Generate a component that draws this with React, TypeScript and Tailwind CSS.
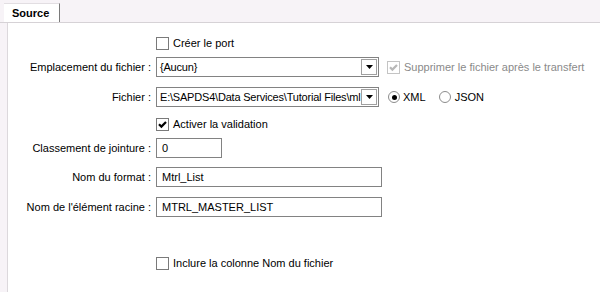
import React from 'react';

const font = { fontFamily: '"Liberation Sans", Arial, sans-serif' };

function Check({ checked = false, disabled = false }: { checked?: boolean; disabled?: boolean }) {
  return (
    <span
      className={
        'flex h-[13px] w-[13px] shrink-0 items-center justify-center border bg-white ' +
        (disabled ? 'border-[#c4c4c4]' : 'border-[#7a7a7a]')
      }
    >
      {checked && (
        <svg width="11" height="11" viewBox="0 0 11 11">
          <path
            d="M2 5.2 L4.4 7.6 L9 3"
            fill="none"
            stroke={disabled ? '#b8b8b8' : '#000'}
            strokeWidth="2.2"
          />
        </svg>
      )}
    </span>
  );
}

function Radio({ on = false }: { on?: boolean }) {
  return (
    <span className="flex h-[12px] w-[12px] shrink-0 items-center justify-center rounded-full border border-[#8c8c8c] bg-white">
      {on && <span className="h-[5px] w-[5px] rounded-full bg-black" />}
    </span>
  );
}

function Select({ value }: { value: string }) {
  return (
    <div className="flex h-[20px] w-[223px] items-center border border-[#828282] bg-white">
      <span className="min-w-0 flex-1 overflow-hidden whitespace-nowrap pl-[3px] tracking-[-0.2px]">{value}</span>
      <span className="mr-[1px] flex h-[16px] w-[16px] shrink-0 items-center justify-center border border-[#a0a0a0] bg-white">
        <svg width="7" height="4" viewBox="0 0 7 4">
          <path d="M0 0 H7 L3.5 4 Z" fill="#000" />
        </svg>
      </span>
    </div>
  );
}

function Input({ value, w }: { value: string; w: string }) {
  return (
    <div className={'flex h-[20px] items-center border border-[#828282] bg-white pl-[5px] ' + w}>{value}</div>
  );
}

function Label({ children }: { children: React.ReactNode }) {
  return <span className="w-[143px] shrink-0 whitespace-nowrap text-right">{children}</span>;
}

export default function App() {
  return (
    <div className="flex h-[292px] w-[600px] flex-col bg-[#f7f3f7] text-[11px] text-black" style={font}>
      <div className="flex h-[22px] shrink-0 items-end">
        <div className="ml-[4px] flex h-[19px] w-[56px] items-center border-t border-r border-t-[#e2dee2] border-r-[#7a7a7a] bg-white pl-[8px] font-bold">
          Source
        </div>
      </div>
      <div className="h-px shrink-0 bg-[#d6d2d6]" />
      <div className="flex flex-1 pl-[7px]">
        <div className="flex flex-1 flex-col border-l border-[#dcd8dc] bg-white pt-[10px]">
          <div className="flex h-[20px] items-center gap-[5px]">
            <span className="w-[143px] shrink-0" />
            <Check />
            <span className="-ml-[1px]">Créer le port</span>
          </div>

          <div className="mt-[4px] flex h-[20px] items-center gap-[5px]">
            <Label>Emplacement du fichier :</Label>
            <Select value="{Aucun}" />
            <span className="ml-[3px]">
              <Check checked disabled />
            </span>
            <span className="-ml-[1px] text-[#8a8a8a]">Supprimer le fichier après le transfert</span>
          </div>

          <div className="mt-[10px] flex h-[20px] items-center gap-[5px]">
            <Label>Fichier :</Label>
            <Select value="E:\SAPDS4\Data Services\Tutorial Files\ml" />
            <span className="ml-[4px]">
              <Radio on />
            </span>
            <span className="-ml-[2px]">XML</span>
            <span className="ml-[8px]">
              <Radio />
            </span>
            <span className="-ml-[1px]">JSON</span>
          </div>

          <div className="mt-[7px] flex h-[20px] items-center gap-[5px]">
            <span className="w-[143px] shrink-0" />
            <Check checked />
            <span className="-ml-[1px]">Activer la validation</span>
          </div>

          <div className="mt-[4px] flex h-[20px] items-center gap-[5px]">
            <Label>Classement de jointure :</Label>
            <Input value="0" w="w-[66px]" />
          </div>

          <div className="mt-[9px] flex h-[20px] items-center gap-[5px]">
            <Label>Nom du format :</Label>
            <Input value="Mtrl_List" w="w-[226px]" />
          </div>

          <div className="mt-[10px] flex h-[20px] items-center gap-[5px]">
            <Label>Nom de l'élément racine :</Label>
            <Input value="MTRL_MASTER_LIST" w="w-[226px]" />
          </div>

          <div className="mt-[36px] flex h-[20px] items-center gap-[5px]">
            <span className="w-[143px] shrink-0" />
            <Check />
            <span className="-ml-[1px]">Inclure la colonne Nom du fichier</span>
          </div>
        </div>
      </div>
    </div>
  );
}
